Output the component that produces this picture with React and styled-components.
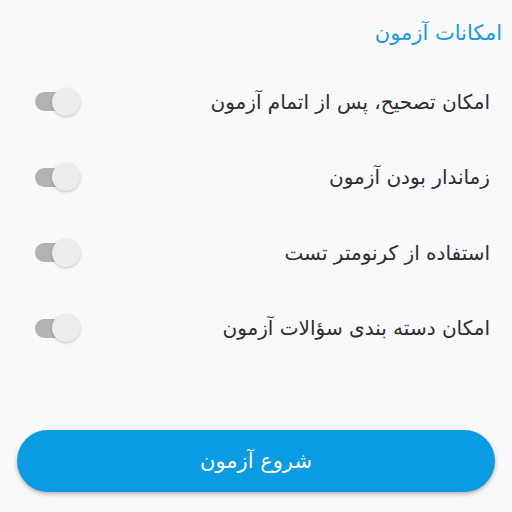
import React from 'react'
import styled, { createGlobalStyle } from 'styled-components'

const GlobalStyle = createGlobalStyle`
  html, body {
    margin: 0;
    padding: 0;
    background: #f9f8fb;
  }
  body {
    font-family: "DejaVu Sans", "Noto Sans", sans-serif;
  }
`

const options = [
  'امکان تصحیح، پس از اتمام آزمون',
  'زماندار بودن آزمون',
  'استفاده از کرنومتر تست',
  'امکان دسته بندی سؤالات آزمون',
]

function App() {
  return (
    <>
      <GlobalStyle />
      <Page dir="rtl">
        <Title>امکانات آزمون</Title>
        <OptionList>
          {options.map((label) => (
            <OptionRow key={label}>
              <OptionLabel>{label}</OptionLabel>
              <Switch>
                <Track />
                <Thumb />
              </Switch>
            </OptionRow>
          ))}
        </OptionList>
        <StartButton>شروع آزمون</StartButton>
      </Page>
    </>
  )
}

export default App

const Page = styled.div`
  width: 512px;
  height: 512px;
  box-sizing: border-box;
  display: flex;
  flex-direction: column;
  padding: 19px 10px 0 10px;
`

const Title = styled.div`
  color: #1b9be0;
  font-size: 21px;
  line-height: 28px;
`

const OptionList = styled.div`
  display: flex;
  flex-direction: column;
  margin-top: 17px;
`

const OptionRow = styled.div`
  height: 75.5px;
  display: flex;
  align-items: center;
  justify-content: space-between;
  padding: 0 12px 0 25px;
`

const OptionLabel = styled.div`
  color: #2e2e2e;
  font-size: 20px;
`

const Switch = styled.div`
  position: relative;
  width: 45px;
  height: 28px;
  display: flex;
  align-items: center;
`

const Track = styled.div`
  width: 34px;
  height: 19px;
  border-radius: 10px;
  background: #b2b2b2;
  margin-right: 11px;
`

const Thumb = styled.div`
  position: absolute;
  right: 0;
  top: 0;
  width: 28px;
  height: 28px;
  border-radius: 50%;
  background: #ececec;
  box-shadow: 0 1px 3px rgba(0, 0, 0, 0.22);
`

const StartButton = styled.button`
  margin-top: auto;
  margin-bottom: 20px;
  height: 62px;
  width: 478px;
  align-self: center;
  border: none;
  border-radius: 31px;
  background: #0a9be3;
  color: #ffffff;
  font-family: "DejaVu Sans", "Noto Sans", sans-serif;
  font-size: 21px;
  box-shadow: 0 2px 4px rgba(0, 0, 0, 0.3);
`
